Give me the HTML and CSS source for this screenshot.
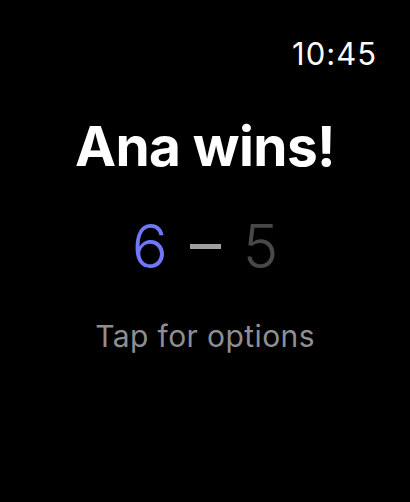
FILE: index.html
```html
<!DOCTYPE html>
<html lang="en">

<head>
    <meta charset="UTF-8">
    <meta name="viewport" content="width=device-width, initial-scale=1.0">
    <title>Match Result</title>
    <link rel="stylesheet" href="styles.css">
</head>

<body>
    <header class="status-bar">
        <span class="clock">10:45</span>
    </header>

    <main class="result">
        <h1 class="winner">Ana wins!</h1>

        <div class="score">
            <span class="score-win">6</span>
            <span class="score-dash"></span>
            <span class="score-lose">5</span>
        </div>

        <p class="hint">Tap for options</p>
    </main>
</body>

</html>
```

FILE: styles.css
```css
body {
    font-family: 'Inter', 'Liberation Sans', sans-serif;
    background-color: #000;
    color: #fff;
    margin: 0;
    width: 410px;
    height: 502px;
    overflow: hidden;
}

.status-bar {
    display: flex;
    justify-content: flex-end;
    padding: 36px 33px 0 0;
}

.clock {
    font-size: 31px;
    line-height: 36px;
    font-weight: 400;
    letter-spacing: 1px;
}

.result {
    display: flex;
    flex-direction: column;
    align-items: center;
    margin-top: 40px;
}

.winner {
    margin: 0;
    font-size: 55px;
    line-height: 68px;
    font-weight: 700;
    letter-spacing: -0.6px;
}

.score {
    display: flex;
    align-items: center;
    gap: 22px;
    margin-top: 31px;
    font-size: 60px;
    line-height: 70px;
    font-weight: 300;
}

.score-win {
    color: #7077ff;
}

.score-dash {
    width: 31px;
    height: 5px;
    background-color: #a0a0a0;
}

.score-lose {
    color: #48484a;
}

.hint {
    margin: 38px 0 0;
    font-size: 30px;
    line-height: 34px;
    letter-spacing: 0.4px;
    color: #8e8e93;
}
```
